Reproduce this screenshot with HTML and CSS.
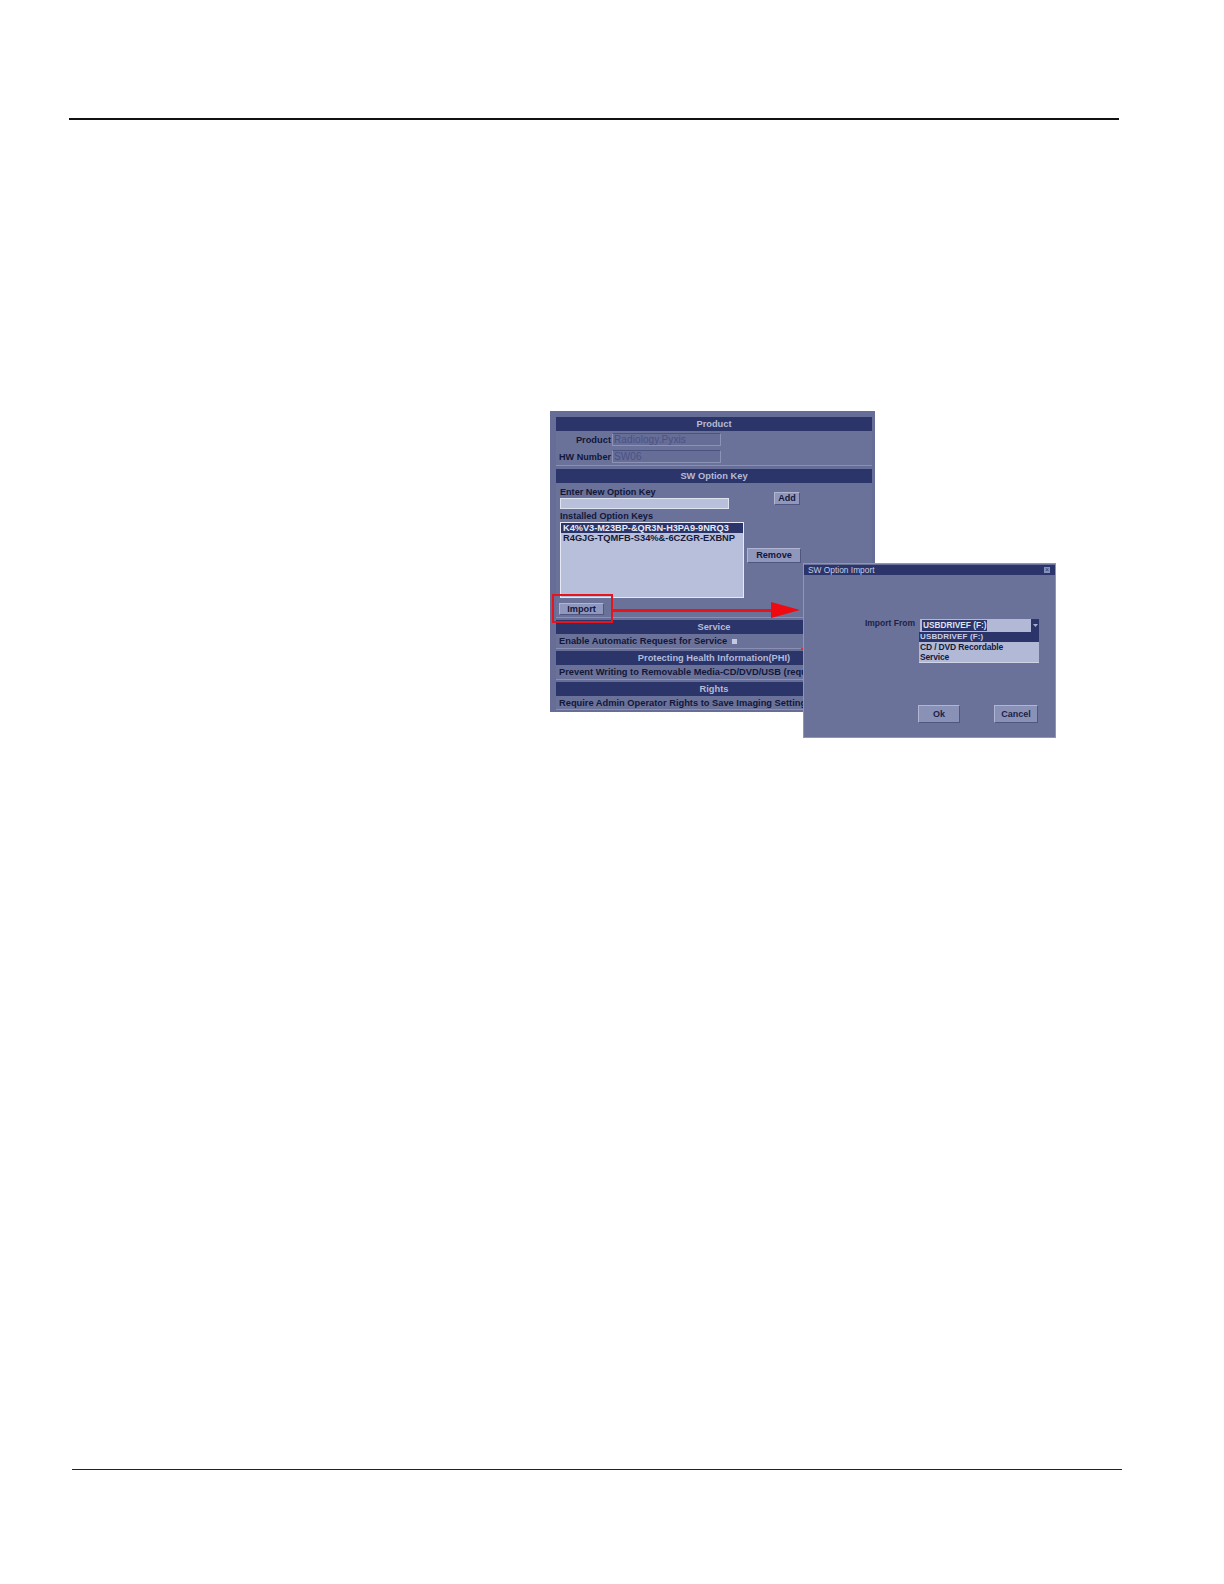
FILE: index.html
```html
<!DOCTYPE html>
<html lang="en">
<head>
<meta charset="utf-8">
<title>SW Option Import</title>
<link rel="stylesheet" href="styles.css">
</head>
<body>
<div class="page">
  <hr class="rule-top">
  <div class="figure">
    <div class="panel">
      <section class="sec sec-product">
        <h3 class="bar">Product</h3>
        <div class="form-rows">
          <div class="frow"><span class="flabel flabel-product">Product</span><span class="ro">Radiology.Pyxis</span></div>
          <div class="frow"><span class="flabel">HW Number</span><span class="ro">SW06</span></div>
        </div>
      </section>
      <section class="sec sec-key">
        <h3 class="bar">SW Option Key</h3>
        <div class="key-body">
          <div class="key-left">
            <div class="lab">Enter New Option Key</div>
            <div class="entry"></div>
            <div class="lab lab2">Installed Option Keys</div>
            <div class="keys">
              <div class="key sel">K4%V3-M23BP-&amp;QR3N-H3PA9-9NRQ3</div>
              <div class="key">R4GJG-TQMFB-S34%&amp;-6CZGR-EXBNP</div>
            </div>
            <button class="btn btn-import">Import</button>
          </div>
          <div class="key-right">
            <button class="btn btn-add">Add</button>
            <button class="btn btn-remove">Remove</button>
          </div>
        </div>
      </section>
      <section class="sec sec-one">
        <h3 class="bar">Service</h3>
        <div class="row">Enable Automatic Request for Service <span class="check"></span></div>
      </section>
      <section class="sec sec-one">
        <h3 class="bar">Protecting Health Information(PHI)</h3>
        <div class="row">Prevent Writing to Removable Media-CD/DVD/USB (required)</div>
      </section>
      <section class="sec sec-one sec-last">
        <h3 class="bar">Rights</h3>
        <div class="row">Require Admin Operator Rights to Save Imaging Settings</div>
      </section>
    </div>

    <div class="redbox"></div>
    <div class="arrow-line"></div>
    <svg class="arrow-head" width="29" height="16" viewBox="0 0 29 16"><path d="M0 0L29 8L0 16Z" fill="#ee0a10"/></svg>
    <div class="redtick"></div>

    <div class="dialog">
      <div class="dtitle"><span>SW Option Import</span><span class="dclose">×</span></div>
      <div class="dbody">
        <div class="import-row">
          <span class="import-label">Import From</span>
          <div class="combo-wrap">
            <div class="combo"><span class="combo-val">USBDRIVEF (F:)</span><span class="combo-btn"><svg width="5" height="3" viewBox="0 0 5 3"><path d="M0 0H5L2.5 3Z" fill="#aab1d0"/></svg></span></div>
            <div class="list">
              <div class="opt opt-sel">USBDRIVEF (F:)</div>
              <div class="opt">CD / DVD Recordable</div>
              <div class="opt">Service</div>
            </div>
          </div>
        </div>
        <div class="dbtns">
          <button class="btn btn-ok">Ok</button>
          <button class="btn btn-cancel">Cancel</button>
        </div>
      </div>
    </div>
  </div>
  <hr class="rule-bottom">
</div>
</body>
</html>
```
FILE: styles.css
```css
html, body { margin: 0; padding: 0; background: #fff; }
body { font-family: "Liberation Sans", Arial, sans-serif; }
.page { width: 1224px; height: 1584px; padding-top: 118px; box-sizing: border-box; overflow: hidden; }
.rule-top { margin: 0 0 0 69px; width: 1050px; height: 2px; border: 0; background: #111; }
.rule-bottom { margin: 731px 0 0 72px; width: 1050px; height: 1px; border: 0; background: #222; }

.figure { position: relative; width: 507px; height: 327px; margin: 291px 0 0 550px; color: #12173a; }
.panel { width: 325px; height: 301px; box-sizing: border-box; padding: 6px 3px 0 6px; background: #666d96; display: flex; flex-direction: column; gap: 2px; }

.sec { background: #6b7299; box-shadow: inset 0 -1px 0 #8a90b4; }
.bar { margin: 0; height: 14px; background: #2c3569; color: #b4bbd8; font-size: 9.3px; font-weight: 700; line-height: 14px; text-align: center; }
.sec-product { height: 49px; margin-bottom: 1px; }
.sec-key { height: 149px; }
.sec-one { height: 29px; }
.sec-last { height: 28px; }

.form-rows { display: flex; flex-direction: column; gap: 4px; padding-top: 2px; }
.frow { display: flex; align-items: center; gap: 1px; height: 13px; }
.flabel { width: 55px; text-align: right; font-size: 9.1px; font-weight: 700; white-space: nowrap; }
.flabel-product { font-size: 9.3px; }
.ro { width: 109px; height: 13px; box-sizing: border-box; border: 1px solid #8c93b6; border-top-color: #4c5380; background: #666d96; color: #4a5285; font-size: 10px; line-height: 11px; padding-left: 1px; letter-spacing: .1px; }

.key-body { display: flex; padding: 3px 0 0 4px; }
.key-left { width: 184px; }
.lab { font-size: 9.1px; font-weight: 700; line-height: 12px; white-space: nowrap; }
.lab2 { margin-top: 1px; }
.entry { width: 169px; height: 11px; background: #b9c0dc; border: 1px solid #dfe3f0; box-sizing: border-box; }
.keys { width: 184px; height: 76px; box-sizing: border-box; background: #b8bfdb; border: 1px solid #e6e9f4; }
.key { font-size: 9.3px; font-weight: 700; line-height: 10px; height: 10px; padding-left: 2px; white-space: nowrap; color: #141a3c; }
.sel { background: #2c3569; color: #e6e9f6; font-size: 9.2px; }

.btn { display: block; margin: 0; padding: 0; font-family: inherit; font-weight: 700; background: #9097bc; color: #12173a; border: 1px solid #4f5680; border-top-color: #b0b6d2; border-left-color: #b0b6d2; text-align: center; }
.btn-import { width: 45px; height: 12px; margin: 5px 0 0 -1px; line-height: 10px; font-size: 9.2px; }
.key-right { flex: 1; display: flex; flex-direction: column; align-items: flex-start; }
.btn-add { width: 26px; height: 13px; margin: 6px 0 0 30px; font-size: 9px; line-height: 11px; }
.btn-remove { width: 54px; height: 15px; margin: 43px 0 0 3px; font-size: 9.2px; line-height: 13px; }

.row { font-size: 9.3px; font-weight: 700; line-height: 14px; padding-left: 3px; white-space: nowrap; overflow: hidden; }
.check { display: inline-block; width: 5px; height: 5px; margin-left: 2px; background: #c3c9e2; vertical-align: 0; }

.redbox { position: absolute; left: 2px; top: 183px; width: 61px; height: 29px; box-sizing: border-box; border: 2px solid #e8141c; }
.arrow-line { position: absolute; left: 62px; top: 198px; width: 160px; height: 3px; background: #e8141c; }
.arrow-head { position: absolute; left: 221px; top: 191px; }
.redtick { position: absolute; left: 251px; top: 237px; width: 3px; height: 2px; background: #d8303a; }

.dialog { position: absolute; left: 253px; top: 152px; width: 253px; height: 175px; box-sizing: border-box; border: 1px solid #8f95b6; padding-top: 1px; background: #6b7299; display: flex; flex-direction: column; }
.dtitle { height: 10px; flex: none; display: flex; justify-content: space-between; align-items: center; background: #2c3569; color: #c6cce4; font-size: 8.4px; line-height: 10px; padding: 0 5px 0 4px; }
.dclose { width: 6px; height: 6px; background: #8a91b6; color: #2c3569; font-size: 7px; line-height: 6px; text-align: center; }
.dbody { flex: 1; padding-top: 44px; }
.import-row { display: flex; align-items: flex-start; }
.import-label { width: 111px; text-align: right; font-size: 8.5px; font-weight: 700; line-height: 8px; color: #1c2248; white-space: nowrap; }
.combo-wrap { margin-left: 4px; width: 120px; }
.combo { width: 119px; height: 13px; margin-left: 1px; display: flex; justify-content: space-between; background: #b2b9d7; }
.combo-val { background: #2c3569; color: #dfe3f2; font-size: 8.3px; font-weight: 700; line-height: 11px; width: 65px; margin: 1px 0 1px 2px; padding-left: 1px; box-sizing: border-box; white-space: nowrap; }
.combo-btn { width: 8px; background: #2c3569; display: flex; align-items: center; justify-content: center; }
.list { background: #b2b9d7; height: 30px; box-shadow: 0 1px 0 #d0d4e8; }
.opt { height: 10px; font-size: 8.5px; font-weight: 700; line-height: 10px; padding-left: 1px; color: #141a3c; letter-spacing: -.15px; white-space: nowrap; }
.opt-sel { background: #2c3569; color: #c8cee6; font-size: 8px; letter-spacing: .15px; }
.dbtns { display: flex; gap: 34px; margin: 43px 0 0 114px; }
.btn-ok { width: 42px; height: 18px; background: #8a91b6; line-height: 15px; font-size: 9px; color: #1c2248; }
.btn-cancel { width: 44px; height: 18px; background: #8a91b6; line-height: 15px; font-size: 9px; color: #1c2248; }
```
